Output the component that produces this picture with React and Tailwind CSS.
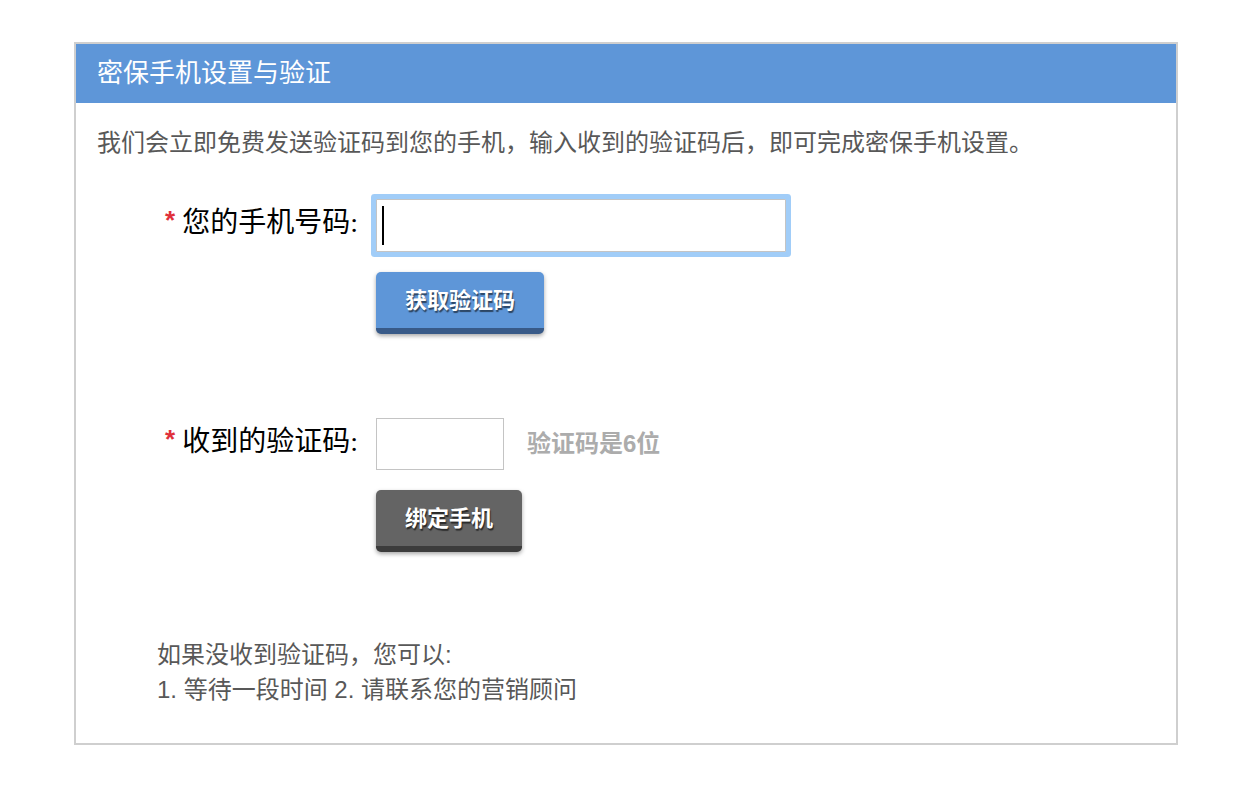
import { useState } from 'react';

const sans = { fontFamily: '"Liberation Sans", "Noto Sans CJK SC", sans-serif' };
const serif = { fontFamily: '"Liberation Serif", "Noto Sans CJK SC", serif' };

const Label = ({ children }) => (
  <div className="w-[279px] shrink-0 pr-[18px] pt-[4px] text-right text-[28px] leading-[40px] text-black" style={serif}>
    <span className="relative -top-[3px] mr-[7px] text-[26px] font-bold text-[#e0303a]" style={sans}>*</span>
    {children}
  </div>
);

const PhoneBinding = () => {
  const [phone, setPhone] = useState('');
  const [code, setCode]   = useState('');

  return (
    <div className="min-h-screen bg-white pt-[42px]" style={sans}>
      <div className="ml-[74px] w-[1104px] border-2 border-[#cfcfcf] bg-white">
        {/* Header */}
        <div className="flex h-[59px] items-center bg-[#5e96d8] pl-[21px] text-[26px] text-white">
          密保手机设置与验证
        </div>

        <div className="px-[21px] pb-[36px]">
          <p className="mt-[22px] text-[24px] leading-[36px] text-[#585858]">
            我们会立即免费发送验证码到您的手机，输入收到的验证码后，即可完成密保手机设置。
          </p>

          {/* Phone number row */}
          <div className="mt-[38px] flex">
            <Label>您的手机号码:</Label>
            <div className="flex flex-col items-start">
              <div className="relative">
                <input
                  value={phone}
                  onChange={(e) => setPhone(e.target.value)}
                  className="block h-[53px] w-[410px] rounded-[1px] border border-[#c4c4c4] bg-white px-2 text-[24px] caret-transparent shadow-[0_0_0_5px_#a1cdf8] outline-none"
                />
                {!phone && <span className="absolute left-[6px] top-[7px] h-[39px] w-[2px] bg-black" />}
              </div>
              <button className="mt-[20px] h-[62px] w-[168px] rounded-[5px] border-b-[6px] border-[#385a88] bg-[#5e96d8] text-[22px] font-bold text-white shadow-[0_2px_4px_rgba(0,0,0,0.35)] [text-shadow:1px_2px_1px_rgba(0,0,0,0.55)]">
                获取验证码
              </button>
            </div>
          </div>

          {/* Code row */}
          <div className="mt-[84px] flex">
            <Label>收到的验证码:</Label>
            <div className="flex flex-col items-start">
              <div className="flex items-center">
                <input
                  value={code}
                  onChange={(e) => setCode(e.target.value)}
                  className="block h-[52px] w-[128px] border border-[#c4c4c4] bg-white px-2 text-[24px] outline-none"
                />
                <span className="ml-[23px] text-[24px] font-semibold text-[#acacac]">验证码是6位</span>
              </div>
              <button className="mt-[20px] h-[62px] w-[146px] rounded-[5px] border-b-[6px] border-[#3c3c3c] bg-[#646464] text-[22px] font-bold text-white shadow-[0_2px_4px_rgba(0,0,0,0.35)] [text-shadow:1px_2px_1px_rgba(0,0,0,0.6)]">
                绑定手机
              </button>
            </div>
          </div>

          {/* Help */}
          <div className="mt-[85px] pl-[60px] text-[24px] leading-[35px] text-[#585858]">
            <p>如果没收到验证码，您可以:</p>
            <p>1. 等待一段时间 2. 请联系您的营销顾问</p>
          </div>
        </div>
      </div>
    </div>
  );
};

export default function App() {
  return <PhoneBinding />;
}
